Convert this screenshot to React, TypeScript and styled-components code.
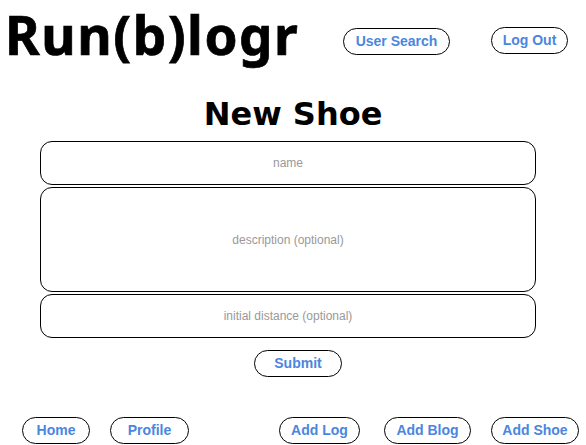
import React from "react";
import styled, { createGlobalStyle } from "styled-components";

const Global = createGlobalStyle`
  html, body { margin: 0; padding: 0; background: #fff; }
  body { font-family: "Liberation Sans", Arial, sans-serif; }
  * { box-sizing: border-box; }
`;

const Page = styled.div`
  width: 586px;
  height: 445px;
  display: flex;
  flex-direction: column;
  overflow: hidden;
`;

const Header = styled.header`
  height: 80px;
  display: flex;
  align-items: flex-start;
  padding-left: 5px;
`;

const Title = styled.h1`
  margin: 0;
  width: 338px;
  font-family: "Noto Sans", "DejaVu Sans", sans-serif;
  font-weight: 700;
  font-size: 53px;
  line-height: 70px;
  letter-spacing: 1.5px;
  -webkit-text-stroke: 0.7px #000;
  color: #000;
  white-space: nowrap;
`;

const PillButton = styled.button<{ $w: number; $ml?: number; $mt?: number }>`
  width: ${(p) => p.$w}px;
  height: 27px;
  margin-left: ${(p) => p.$ml ?? 0}px;
  margin-top: ${(p) => p.$mt ?? 0}px;
  padding: 0;
  flex: 0 0 auto;
  border: 1px solid #000;
  border-radius: 14px;
  background: #fff;
  color: #4a86e0;
  font-family: "Liberation Sans", Arial, sans-serif;
  font-weight: 700;
  font-size: 14px;
  line-height: 25px;
  text-align: center;
  cursor: pointer;
`;

const Heading = styled.h2`
  margin: 18px 0 0;
  text-align: center;
  font-family: "DejaVu Sans", Verdana, sans-serif;
  font-weight: 700;
  font-size: 32px;
  line-height: 32px;
  color: #000;
`;

const Form = styled.form`
  margin: 11px 0 0 40px;
  width: 496px;
  display: flex;
  flex-direction: column;
  gap: 2px;
`;

const Field = styled.input<{ $h: number }>`
  height: ${(p) => p.$h}px;
  width: 100%;
  border: 1px solid #000;
  border-radius: 12px;
  background: #fff;
  text-align: center;
  font-family: "Liberation Sans", Arial, sans-serif;
  font-size: 12px;
  color: #000;
  outline: none;
  &::placeholder { color: #999; }
`;

const SubmitRow = styled.div`
  display: flex;
  justify-content: center;
  padding-left: 20px;
  margin-top: 10px;
`;

const BottomNav = styled.nav`
  margin-top: 40px;
  display: flex;
  align-items: center;
`;

export default function App() {
  return (
    <Page>
      <Global />
      <Header>
        <Title>Run(b)logr</Title>
        <PillButton $w={107} $mt={28}>User Search</PillButton>
        <PillButton $w={77} $ml={41} $mt={27}>Log Out</PillButton>
      </Header>
      <Heading>New Shoe</Heading>
      <Form onSubmit={(e) => e.preventDefault()}>
        <Field $h={44} placeholder="name" />
        <Field $h={105} placeholder="description (optional)" />
        <Field $h={44} placeholder="initial distance (optional)" />
        <SubmitRow>
          <PillButton $w={88} type="submit">Submit</PillButton>
        </SubmitRow>
      </Form>
      <BottomNav>
        <PillButton $w={68} $ml={22}>Home</PillButton>
        <PillButton $w={79} $ml={20}>Profile</PillButton>
        <PillButton $w={81} $ml={90}>Add Log</PillButton>
        <PillButton $w={87} $ml={24}>Add Blog</PillButton>
        <PillButton $w={88} $ml={20}>Add Shoe</PillButton>
      </BottomNav>
    </Page>
  );
}
